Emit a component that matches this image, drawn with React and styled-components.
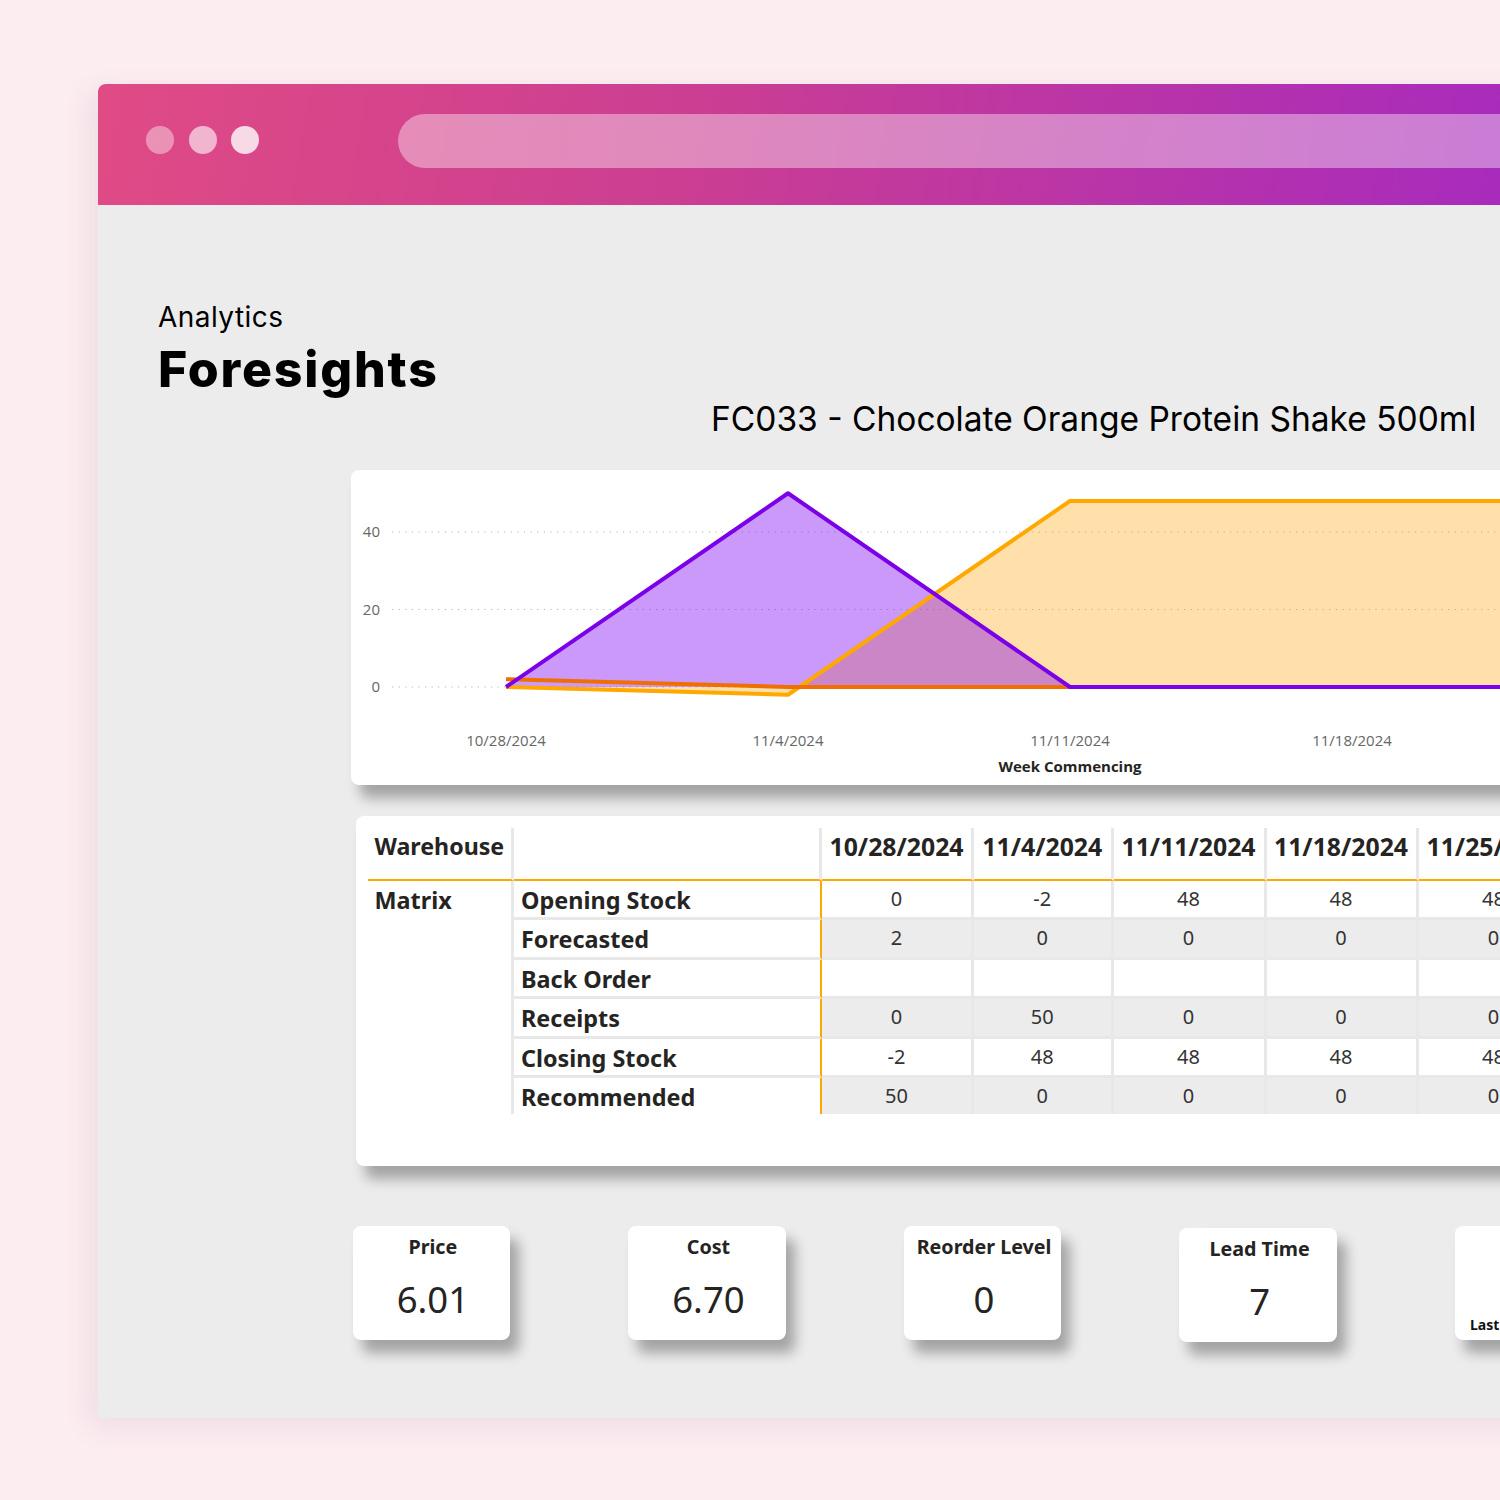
import React from 'react'
import styled, { createGlobalStyle } from 'styled-components'

const GlobalStyle = createGlobalStyle`
  html, body {
    margin: 0;
    padding: 0;
    background: #fcedf1;
  }
`

const weeks = ['10/28/2024', '11/4/2024', '11/11/2024', '11/18/2024', '11/25/2024']

const rows = [
  { name: 'Opening Stock', values: ['0', '-2', '48', '48', '48'] },
  { name: 'Forecasted', values: ['2', '0', '0', '0', '0'] },
  { name: 'Back Order', values: ['', '', '', '', ''] },
  { name: 'Receipts', values: ['0', '50', '0', '0', '0'] },
  { name: 'Closing Stock', values: ['-2', '48', '48', '48', '48'] },
  { name: 'Recommended', values: ['50', '0', '0', '0', '0'] },
]

const kpis = [
  { label: 'Price', value: '6.01' },
  { label: 'Cost', value: '6.70' },
  { label: 'Reorder Level', value: '0' },
  { label: 'Lead Time', value: '7', nudge: 2 },
]

// chart scale, in the coordinates of the chart card
const xAt = (i) => 155 + i * 282
const yAt = (v) => 217 - v * 3.875
const END = 1300

const pts = (list) => list.map(([x, y]) => `${x},${y}`).join(' ')

const amberLine = [[xAt(0), yAt(0)], [xAt(1), yAt(-2)], [xAt(2), yAt(48)], [END, yAt(48)]]
const purpleLine = [[xAt(0), yAt(0)], [xAt(1), yAt(50)], [xAt(2), yAt(0)], [END, yAt(0)]]
const redLine = [[xAt(0), yAt(2)], [xAt(1), yAt(0)], [xAt(2), yAt(0)]]

const Page = styled.div`
  width: 1500px;
  height: 1500px;
  overflow: hidden;
  padding: 84px 0 0 98px;
  box-sizing: border-box;
  background: #fcedf1;
`

const Browser = styled.div`
  width: 1500px;
  height: 1334px;
  background: #ececec;
  border-radius: 8px 0 0 0;
  box-shadow: -8px 8px 28px rgba(120, 70, 90, 0.1);
`

const TitleBar = styled.div`
  height: 121px;
  width: 1402px;
  box-sizing: border-box;
  padding-left: 48px;
  display: flex;
  align-items: center;
  border-radius: 8px 0 0 0;
  background: linear-gradient(100deg, #e04b85 0%, #cb3e92 42%, #a82bbc 100%);
`

const Dots = styled.div`
  display: flex;
  gap: 14.5px;
  width: 252px;
  margin-top: -10px;
`

const Dot = styled.span`
  width: 28px;
  height: 28px;
  border-radius: 50%;
  background: rgba(255, 255, 255, ${(p) => p.$alpha});
`

const UrlBar = styled.div`
  flex: 1;
  height: 54px;
  margin-top: -8px;
  border-radius: 27px 0 0 27px;
  background: rgba(255, 255, 255, 0.39);
`

const Content = styled.div`
  padding-top: 94px;
`

const Heading = styled.div`
  margin-left: 60px;
  font-family: Inter, sans-serif;
  color: #000;
`

const Section = styled.div`
  font-size: 28px;
  line-height: 36px;
  letter-spacing: 0.45px;
`

const Title = styled.h1`
  margin: 0;
  padding-top: 5px;
  font-size: 50px;
  line-height: 59px;
  font-weight: 800;
  letter-spacing: 1.8px;
`

const Product = styled.h2`
  margin: 0 0 31px 613px;
  font-family: Inter, sans-serif;
  font-size: 33.5px;
  line-height: 40px;
  font-weight: 400;
  color: #000;
  white-space: nowrap;
`

const Card = styled.div`
  background: #fff;
  border-radius: 8px;
  box-shadow: 9px 13px 13px rgba(0, 0, 0, 0.31);
`

const ChartCard = styled(Card)`
  width: 1300px;
  height: 315px;
  margin-left: 253px;
`

const ChartSvg = styled.svg`
  display: block;
  font-family: 'Open Sans', sans-serif;
`

const TableCard = styled(Card)`
  width: 1300px;
  height: 350px;
  box-sizing: border-box;
  margin: 31px 0 0 257.5px;
  padding: 12px 0 0 12px;
  overflow: hidden;
`

const Matrix = styled.div`
  display: grid;
  grid-template-columns: 146.5px 308px 152px 139.5px 153px 152px 153px;
  grid-template-rows: 53px repeat(5, 39.4px) 36px;
  font-family: 'Noto Sans', sans-serif;
  color: #252423;
`

const HeadCell = styled.div`
  box-sizing: border-box;
  border-right: 3.5px solid #e8e8e8;
  border-bottom: 2px solid #ffa800;
  font-size: ${(p) => (p.$left ? '23.2px' : '24.8px')};
  line-height: 36px;
  font-weight: 700;
  white-space: nowrap;
  overflow: hidden;
  text-align: ${(p) => (p.$left ? 'left' : 'center')};
  padding-left: ${(p) => (p.$left ? '7px' : '0')};
`

const GroupCell = styled.div`
  grid-row: 2 / span 6;
  box-sizing: border-box;
  border-right: 3.5px solid #e8e8e8;
  padding: 1px 0 0 7px;
  font-size: 23.4px;
  line-height: 36px;
  font-weight: 700;
`

const RowName = styled.div`
  grid-column: 2;
  box-sizing: border-box;
  border-right: 2px solid #ffa800;
  border-bottom: ${(p) => (p.$last ? '0' : '3px solid #e8e8e8')};
  padding: 1px 0 0 7px;
  font-size: 23.4px;
  line-height: 36px;
  font-weight: 700;
  white-space: nowrap;
`

const ValueCell = styled.div`
  box-sizing: border-box;
  border-right: 3.5px solid #e8e8e8;
  border-bottom: ${(p) => (p.$last ? '0' : '3px solid #e8e8e8')};
  background: ${(p) => (p.$shaded ? '#ececec' : '#fff')};
  font-size: 20px;
  line-height: 35px;
  text-align: center;
  color: #333;
`

const KpiRow = styled.div`
  display: grid;
  grid-template-columns: repeat(5, 157.5px);
  column-gap: 118.1px;
  margin: 60px 0 0 254.6px;
`

const KpiCard = styled(Card)`
  height: 114px;
  margin-top: ${(p) => p.$nudge || 0}px;
  padding: 7px 0 0 3px;
  box-sizing: border-box;
  text-align: center;
  font-family: 'Noto Sans', sans-serif;
  color: #252423;
`

const KpiLabel = styled.div`
  font-size: 19.7px;
  line-height: 28px;
  font-weight: 700;
  white-space: nowrap;
`

const KpiValue = styled.div`
  margin-top: 12px;
  font-size: 36.5px;
  line-height: 52px;
`

const LastCard = styled(KpiCard)`
  display: flex;
  align-items: flex-end;
  padding: 0 0 6px 15px;
`

const LastLabel = styled.div`
  font-size: 14px;
  line-height: 18px;
  font-weight: 700;
  color: #111;
`

function Chart() {
  return (
    <ChartSvg width="1300" height="315" viewBox="0 0 1300 315">
      {[40, 20, 0].map((v) => (
        <g key={v}>
          <line x1="41" x2={END} y1={yAt(v)} y2={yAt(v)} stroke="#b5b5b5" strokeWidth="1.2" strokeDasharray="1.2 5.4" />
          <text x="29" y={yAt(v) + 5} textAnchor="end" fontSize="15" fill="#666">{v}</text>
        </g>
      ))}
      <polygon points={pts([[xAt(0), yAt(0)], ...amberLine.slice(1), [END, yAt(0)]])} fill="#ffa000" fillOpacity="0.33" />
      <polygon points={pts([...purpleLine])} fill="#7b00f0" fillOpacity="0.4" />
      <polyline points={pts(amberLine)} fill="none" stroke="#ffa800" strokeWidth="4" strokeLinejoin="round" />
      <polyline points={pts(redLine)} fill="none" stroke="#ef7000" strokeWidth="4" />
      <polyline points={pts(purpleLine)} fill="none" stroke="#7b00e8" strokeWidth="4" strokeLinejoin="round" />
      {weeks.slice(0, 4).map((w, i) => (
        <text key={w} x={xAt(i)} y="276" textAnchor="middle" fontSize="15" fill="#666">{w}</text>
      ))}
      <text x={xAt(2)} y="301.5" textAnchor="middle" fontSize="15" fontWeight="700" fill="#252423">Week Commencing</text>
    </ChartSvg>
  )
}

function StockTable() {
  return (
    <Matrix>
      <HeadCell $left>Warehouse</HeadCell>
      <HeadCell />
      {weeks.map((w) => <HeadCell key={w}>{w}</HeadCell>)}
      <GroupCell>Matrix</GroupCell>
      {rows.map((row, r) => (
        <React.Fragment key={row.name}>
          <RowName $last={r === rows.length - 1}>{row.name}</RowName>
          {row.values.map((v, c) => (
            <ValueCell key={c} $shaded={r % 2 === 1} $last={r === rows.length - 1}>{v}</ValueCell>
          ))}
        </React.Fragment>
      ))}
    </Matrix>
  )
}

export default function App() {
  return (
    <Page>
      <GlobalStyle />
      <Browser>
        <TitleBar>
          <Dots>
            <Dot $alpha={0.4} />
            <Dot $alpha={0.6} />
            <Dot $alpha={0.8} />
          </Dots>
          <UrlBar />
        </TitleBar>
        <Content>
          <Heading>
            <Section>Analytics</Section>
            <Title>Foresights</Title>
          </Heading>
          <Product>FC033 - Chocolate Orange Protein Shake 500ml</Product>
          <ChartCard><Chart /></ChartCard>
          <TableCard><StockTable /></TableCard>
          <KpiRow>
            {kpis.map((k) => (
              <KpiCard key={k.label} $nudge={k.nudge}>
                <KpiLabel>{k.label}</KpiLabel>
                <KpiValue>{k.value}</KpiValue>
              </KpiCard>
            ))}
            <LastCard><LastLabel>Last</LastLabel></LastCard>
          </KpiRow>
        </Content>
      </Browser>
    </Page>
  )
}
